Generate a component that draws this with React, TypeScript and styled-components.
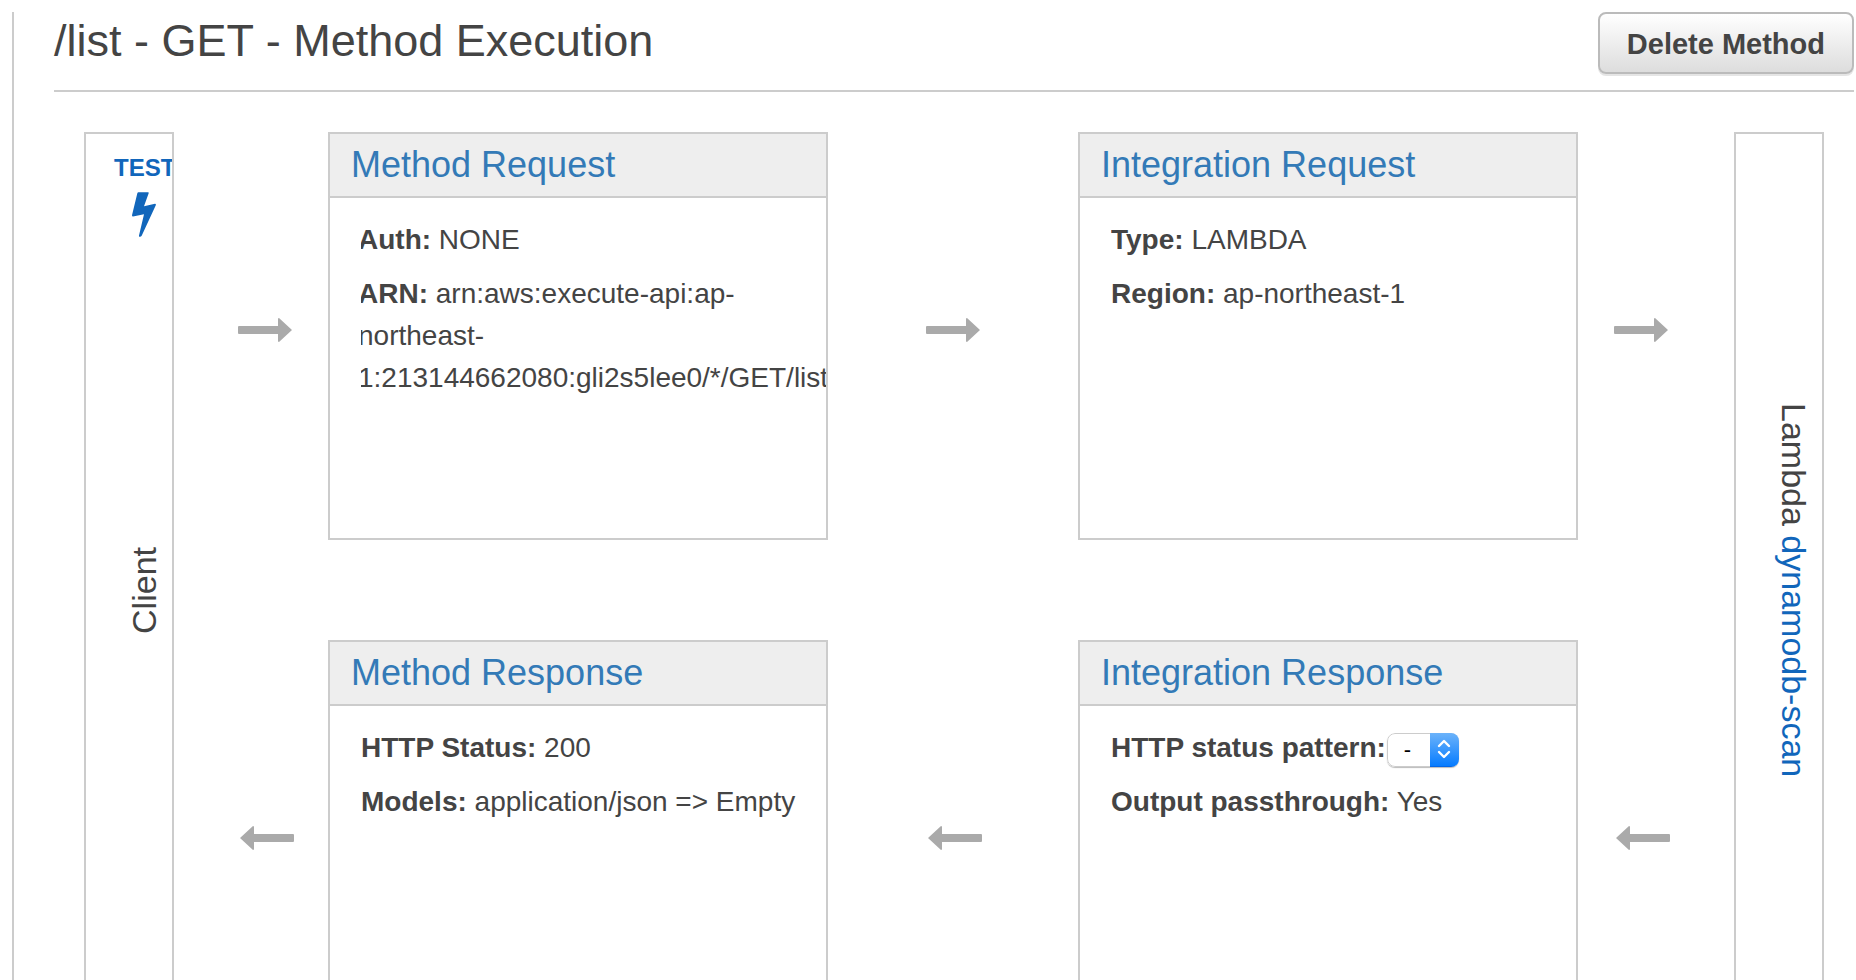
import React from 'react';
import styled, { createGlobalStyle } from 'styled-components';

const GlobalStyle = createGlobalStyle`
  *, *::before, *::after { box-sizing: border-box; }
  body {
    margin: 0;
    background: #fff;
    color: #444;
    font-family: "Liberation Sans", Arial, sans-serif;
    font-size: 28px;
    line-height: 42px;
  }
`;

const Viewport = styled.div`
  height: 100vh;
  overflow-y: auto;
  scrollbar-width: none;
  padding: 12px 2px 0 12px;
`;

const Pane = styled.main`
  border-left: 2px solid #ccc;
  padding-left: 40px;
`;

const Header = styled.header`
  display: flex;
  align-items: flex-start;
  justify-content: space-between;
  padding-bottom: 16px;
  border-bottom: 2px solid #ccc;
`;

const Title = styled.h1`
  margin: 0;
  font-size: 45px;
  font-weight: 400;
  line-height: 58px;
`;

const DeleteButton = styled.button`
  height: 62px;
  padding: 2px 27px 0;
  border: 2px solid #bbb;
  border-radius: 8px;
  background: linear-gradient(#fff, #ddd);
  box-shadow: 0 2px 0 #e5e5e5;
  color: #444;
  font: bold 29px "Liberation Sans", Arial, sans-serif;
  white-space: nowrap;
  cursor: pointer;
`;

const Flow = styled.div`
  display: grid;
  grid-template-columns:
    90px minmax(0, 154fr) minmax(0, 500fr) minmax(0, 250fr)
    minmax(0, 500fr) minmax(0, 156fr) 90px;
  grid-template-rows: minmax(408px, auto) minmax(408px, auto);
  row-gap: 100px;
  padding: 40px 30px;
`;

const Endpoint = styled.section<{ $column: number }>`
  grid-row: 1 / span 2;
  grid-column: ${(p) => p.$column};
  display: grid;
  grid-template: 100% / 100%;
  border: 2px solid #ccc;
  overflow: hidden;
`;

const EndpointName = styled.div<{ $upward?: boolean }>`
  grid-area: 1 / 1;
  place-self: center;
  margin-left: 30px;
  writing-mode: vertical-rl;
  transform: ${(p) => (p.$upward ? 'rotate(180deg)' : 'none')};
  font-size: 34px;
  line-height: 40px;
  white-space: nowrap;
`;

const LambdaLink = styled.a`
  color: #16b;
  text-decoration: none;
`;

const TestLink = styled.a`
  grid-area: 1 / 1;
  z-index: 1;
  align-self: start;
  display: flex;
  flex-direction: column;
  gap: 10px;
  padding: 20px 0 0 28px;
  color: #16b;
  font-size: 24px;
  font-weight: bold;
  line-height: 28px;
  text-decoration: none;

  svg { margin-left: 18px; }
`;

const ArrowCell = styled.div<{ $side?: 'start' | 'end'; $back?: boolean }>`
  display: flex;
  align-items: center;
  justify-content: center;
  padding-bottom: 12px;
  padding-left: ${(p) => (p.$side === 'start' ? 28 : 0) + (p.$back ? 4 : 0)}px;
  padding-right: ${(p) => (p.$side === 'end' ? 30 : 0)}px;
`;

const Card = styled.section`
  border: 2px solid #ccc;
  overflow: hidden;
`;

const CardHeader = styled.h2`
  margin: 0;
  padding: 10px 21px;
  border-bottom: 2px solid #ccc;
  background: #eee;
  font-size: 36px;
  font-weight: 400;
  line-height: 42px;
  white-space: nowrap;
`;

const CardLink = styled.a`
  color: #337ab7;
  text-decoration: none;
`;

const CardBody = styled.div`
  margin: 21px 0 0 31px;
  overflow: hidden;
`;

const Field = styled.p<{ $outdent?: boolean }>`
  margin: 0 0 12px ${(p) => (p.$outdent ? '-3px' : '0')};
`;

const SelectBox = styled.span`
  position: relative;
  display: inline-flex;
  width: 72px;
  height: 34px;
  margin-left: 1px;
  vertical-align: middle;
  border-radius: 8px;
  box-shadow: 0 1px 1px #bbb;
  overflow: hidden;
`;

const StatusSelect = styled.select`
  appearance: none;
  width: 100%;
  height: 100%;
  padding: 0 0 0 16px;
  border: 1px solid #ccc;
  border-radius: 8px;
  background: #fff;
  color: #000;
  font: 22px "Liberation Sans", Arial, sans-serif;
`;

const SelectKnob = styled.span`
  position: absolute;
  inset: 0 0 0 auto;
  width: 29px;
  display: flex;
  align-items: center;
  justify-content: center;
  background: linear-gradient(#6cb3fa, #077cff);
  border-bottom: 1px solid #0567e6;
  pointer-events: none;
`;

function Arrow({ back }: { back?: boolean }) {
  return (
    <svg width="54" height="24" viewBox="0 0 54 24" fill="#aaa" aria-hidden="true">
      {back ? (
        <path d="M54 9v6q0 1-1 1H14v7q0 1-1 1L0 12 13 0q1 0 1 1v7h39q1 0 1 1z" />
      ) : (
        <path d="M0 9v6q0 1 1 1h39v7q0 1 1 1L54 12 41 0q-1 0-1 1v7H1q-1 0-1 1z" />
      )}
    </svg>
  );
}

function Bolt() {
  return (
    <svg width="24" height="45" viewBox="0 0 72 134" fill="#16b" aria-hidden="true">
      <path d="M19 0H48Q51 0 50 3L36 42 69 35Q73 35 71 40L29 131Q27 134 24 134 20 134 21 130L36 66 3 73Q0 73 0 69L16 3Q17 0 19 0Z" />
    </svg>
  );
}

export default function App() {
  return (
    <>
      <GlobalStyle />
      <Viewport>
        <Pane>
          <Header>
            <Title>/list - GET - Method Execution</Title>
            <DeleteButton type="button">Delete Method</DeleteButton>
          </Header>
          <Flow>
            <Endpoint $column={1}>
              <TestLink href="#test">
                TEST
                <Bolt />
              </TestLink>
              <EndpointName $upward>Client</EndpointName>
            </Endpoint>

            <ArrowCell $side="start"><Arrow /></ArrowCell>
            <Card>
              <CardHeader><CardLink href="#method-request">Method Request</CardLink></CardHeader>
              <CardBody>
                <Field $outdent><b>Auth:</b> NONE</Field>
                <Field $outdent>
                  <b>ARN:</b> arn:aws:execute-api:ap-<wbr />northeast-<wbr />1:213144662080:gli2s5lee0/*/GET/list
                </Field>
              </CardBody>
            </Card>
            <ArrowCell><Arrow /></ArrowCell>
            <Card>
              <CardHeader><CardLink href="#integration-request">Integration Request</CardLink></CardHeader>
              <CardBody>
                <Field><b>Type:</b> LAMBDA</Field>
                <Field><b>Region:</b> ap-northeast-1</Field>
              </CardBody>
            </Card>
            <ArrowCell $side="end"><Arrow /></ArrowCell>

            <Endpoint $column={7}>
              <EndpointName>
                Lambda <LambdaLink href="#dynamodb-scan">dynamodb-scan</LambdaLink>
              </EndpointName>
            </Endpoint>

            <ArrowCell $side="start" $back><Arrow back /></ArrowCell>
            <Card>
              <CardHeader><CardLink href="#method-response">Method Response</CardLink></CardHeader>
              <CardBody>
                <Field><b>HTTP Status:</b> 200</Field>
                <Field><b>Models:</b> application/json =&gt; Empty</Field>
              </CardBody>
            </Card>
            <ArrowCell $back><Arrow back /></ArrowCell>
            <Card>
              <CardHeader><CardLink href="#integration-response">Integration Response</CardLink></CardHeader>
              <CardBody>
                <Field>
                  <label htmlFor="status-pattern"><b>HTTP status pattern:</b></label>
                  <SelectBox>
                    <StatusSelect id="status-pattern" defaultValue="-">
                      <option>-</option>
                    </StatusSelect>
                    <SelectKnob>
                      <svg width="14" height="20" viewBox="0 0 14 20" fill="none" stroke="#fff" strokeWidth="2.4" strokeLinecap="round" strokeLinejoin="round" aria-hidden="true">
                        <path d="M2 7l5-5 5 5M2 13l5 5 5-5" />
                      </svg>
                    </SelectKnob>
                  </SelectBox>
                </Field>
                <Field><b>Output passthrough:</b> Yes</Field>
              </CardBody>
            </Card>
            <ArrowCell $side="end" $back><Arrow back /></ArrowCell>
          </Flow>
        </Pane>
      </Viewport>
    </>
  );
}
